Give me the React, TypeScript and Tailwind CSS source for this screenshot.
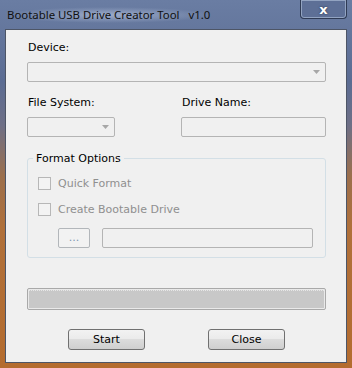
const body = "font-['DejaVu_Sans',sans-serif] text-[11px] leading-[13px]";

function Arrow() {
  return (
    <svg width="7" height="4" viewBox="0 0 7 4" className="ml-auto mr-[5px]">
      <path d="M0 0h7L3.5 4z" fill="#a7a7a7" />
    </svg>
  );
}

function Combo({ className }: { className: string }) {
  return (
    <div
      className={`flex h-[20px] items-center rounded-[2px] border border-[#b4b4b4] bg-[#f0f0f0] ${className}`}
    >
      <Arrow />
    </div>
  );
}

function CheckRow({ label }: { label: string }) {
  return (
    <div className="flex items-center">
      <div className="h-[13px] w-[13px] border border-[#b7b7b7] bg-[#f3f3f3]" />
      <span className="ml-[7px] text-[#8f8f8f]">{label}</span>
    </div>
  );
}

function WinButton({ label }: { label: string }) {
  return (
    <button className="flex h-[21px] w-[77px] items-center justify-center rounded-[3px] border border-[#707070] bg-[linear-gradient(#f2f2f2_0%,#ebebeb_45%,#dcdcdc_50%,#cfcfcf_100%)] text-black">
      {label}
    </button>
  );
}

export default function App() {
  return (
    <div className="flex h-[368px] w-[352px] flex-col overflow-hidden bg-[linear-gradient(180deg,#6a7da3_0%,#5b6c93_22%,#6e6f86_34%,#9c6f4c_48%,#b0703a_62%,#b46c2f_100%)]">
      {/* title bar */}
      <div className="flex h-[29px] shrink-0 items-start">
        <div className="mt-[7px] ml-[5px] rounded-full bg-[radial-gradient(closest-side,rgba(200,212,235,0.55),rgba(200,212,235,0))] px-[2px] font-['Noto_Sans',sans-serif] text-[11.4px] leading-[16px] whitespace-pre text-[#101010]">
          {"Bootable USB Drive Creator Tool   v1.0"}
        </div>
        <div className="mr-[5px] ml-auto flex h-[19px] w-[47px] items-center justify-center rounded-b-[4px] border border-t-0 border-[#2f3b55] bg-[#5d6f96] shadow-[inset_0_0_0_1px_rgba(190,205,230,0.55)]">
          <span className="font-['DejaVu_Sans',sans-serif] text-[13px] leading-[13px] font-bold text-white [text-shadow:0_0_2px_#1c2a44]">
            x
          </span>
        </div>
      </div>

      {/* client area */}
      <div className={`mx-[5px] flex h-[334px] w-[342px] flex-col border border-[#4d5566] bg-[#f0f0f0] pr-[20px] pl-[21px] text-black ${body}`}>
        <div className="mt-[11px] ml-[1px]">Device:</div>
        <Combo className="mt-[8px] w-full" />

        <div className="mt-[14px] flex">
          <div className="w-[154px]">
            <div className="ml-[1px]">File System:</div>
            <Combo className="mt-[8px] w-[88px]" />
          </div>
          <div className="flex-1">
            <div className="ml-[1px]">Drive Name:</div>
            <div className="mt-[8px] h-[20px] w-full rounded-[2px] border border-[#b4b4b4] bg-[#f0f0f0]" />
          </div>
        </div>

        <fieldset className="mt-[15px] rounded-[3px] border border-[#d3dfe6] pt-[12px] pr-[12px] pb-[9px] pl-[10px]">
          <legend className="-ml-[5px] px-[3px]">Format Options</legend>
          <CheckRow label="Quick Format" />
          <div className="mt-[13px]">
            <CheckRow label="Create Bootable Drive" />
          </div>
          <div className="mt-[12px] flex">
            <div className="ml-[20px] flex h-[20px] w-[32px] items-start justify-center rounded-[2px] border border-[#b2b6ba] bg-[#f2f2f2] pt-[2px] text-[#7f97b4]">
              ...
            </div>
            <div className="ml-[12px] h-[20px] flex-1 rounded-[2px] border border-[#b4b4b4] bg-[#f0f0f0]" />
          </div>
        </fieldset>

        <div className="mt-[30px] h-[22px] w-full rounded-[2px] border border-[#a9a9a9] bg-[#e9e9e9] p-[1px]">
          <div className="h-full w-full border-t border-dotted border-[#e6e6e6] bg-[#c8c8c8]" />
        </div>

        <div className="mt-[19px] flex">
          <div className="ml-[41px]">
            <WinButton label="Start" />
          </div>
          <div className="ml-[63px]">
            <WinButton label="Close" />
          </div>
        </div>
      </div>
    </div>
  );
}
